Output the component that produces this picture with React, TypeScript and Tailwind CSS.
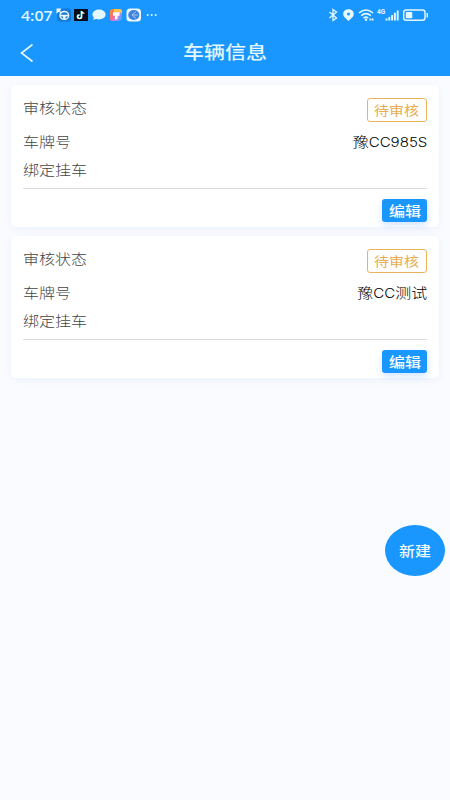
import React from "react";

const cjk = "font-['Noto_Sans_CJK_SC',sans-serif]";

type Vehicle = { id: number; prefix: string; latin: string; suffix: string };

const vehicles: Vehicle[] = [
  { id: 1, prefix: "豫", latin: "CC985S", suffix: "" },
  { id: 2, prefix: "豫", latin: "CC", suffix: "测试" },
];

function StatusBar() {
  return (
    <div className="flex h-[29px] items-center pl-[21px] pr-[21px] text-[#e4f8ff]">
      <span className="w-[35px] whitespace-nowrap font-['Noto_Sans',sans-serif] text-[15px] font-medium leading-[20px]">
        <span className="inline-block origin-left scale-x-[1.06]">4:07</span>
      </span>
      <svg className="h-[14px] w-[102px]" viewBox="0 0 102 14" fill="none">
        <rect x="1" y="0.5" width="14" height="13" rx="2" fill="#1579d6" />
        <path d="M0.5 0.500h5L4 2.800l2 2-1 1-2-2-2.500 2z" fill="#e4f8ff" />
        <ellipse cx="8.300" cy="7.400" rx="4.300" ry="3.900" stroke="#e9f8ff" strokeWidth="1.400" />
        <path d="M4.500 6.800h7.600v1.400L9.800 8.500l-.6 2.500H7.400l-.6-2.500-2.300-.3z" fill="#e9f8ff" />
        <rect x="18" y="1" width="14" height="12" fill="#080b19" />
        <path d="M25.100 2.800v5.800a2 1.800 0 1 1-2-1.800" stroke="#41dcdf" strokeWidth="1.300" />
        <path d="M25.700 3v5.800a2 1.800 0 1 1-2-1.800M25.700 3.200q.4 2 2.700 2.200" stroke="#fff" strokeWidth="1.400" />
        <ellipse cx="43" cy="6.500" rx="6.600" ry="5" fill="#e4f8ff" />
        <path d="M38 9l-.8 3 4-1.500z" fill="#e4f8ff" />
        <defs>
          <linearGradient id="app" x1="54" y1="3" x2="66" y2="11" gradientUnits="userSpaceOnUse">
            <stop stopColor="#ff8a35" />
            <stop offset=".35" stopColor="#ff6b72" />
            <stop offset=".6" stopColor="#d580e8" />
            <stop offset="1" stopColor="#35a9ff" />
          </linearGradient>
        </defs>
        <rect x="54" y="1" width="12" height="12" rx="2.500" fill="url(#app)" />
        <path d="M58 1h5.500q2.500 0 2.500 2.500v1.500l-8-1z" fill="#ffc34d" />
        <path d="M57 4.200h6.500v3.500h-2v3.500h-2.500V7.700h-2z" fill="#fff" />
        <rect x="70.500" y="0.500" width="14.500" height="13" rx="3.500" fill="#eef8ff" />
        <ellipse cx="77.800" cy="7" rx="5.600" ry="4.900" fill="#3f83dc" />
        <path d="M79.800 3.800L76 7l4 3.300M76 7h5.500" stroke="#b8d8f8" strokeWidth=".8" />
        <circle cx="91.700" cy="7" r="1" fill="#e4f8ff" />
        <circle cx="95.700" cy="7" r="1" fill="#e4f8ff" />
        <circle cx="99.700" cy="7" r="1" fill="#e4f8ff" />
      </svg>
      <svg className="ml-auto h-[14px] w-[101px]" viewBox="0 0 101 14" fill="none" stroke="#e4f8ff">
        <path d="M1.500 4l7 6L5 12.500v-11L8.500 4l-7 6" strokeWidth="1.300" />
        <path d="M20.500 1.200c-3 0-5.300 2-5.300 4.700 0 3.200 3.200 4.700 5.300 7 2.100-2.300 5.300-3.800 5.300-7 0-2.700-2.300-4.700-5.300-4.700z" fill="#e4f8ff" stroke="none" />
        <circle cx="20.500" cy="5.900" r="1.500" fill="#1997ff" stroke="none" />
        <path d="M31 5q7-6 14 0M33.200 7.700q4.800-4 9.600 0M35.600 10q2.400-1.900 4.600 0" strokeWidth="1.600" />
        <circle cx="38" cy="11.700" r="1.200" fill="#e4f8ff" stroke="none" />
        <path d="M41.500 11.400h4" strokeWidth="2" strokeDasharray="1.700 .6" />
        <text x="49" y="6" fill="#e4f8ff" stroke="none" fontSize="6.500" fontWeight="700" fontFamily="Roboto, sans-serif">4G</text>
        <path d="M58.500 12.500v-2M61.300 12.500V9M64.100 12.500V7M66.900 12.500V4.800M69.700 12.500V2.500" strokeWidth="1.900" />
        <rect x="75.700" y="2" width="21.300" height="10.300" rx="2.500" strokeWidth="1.400" />
        <rect x="77.800" y="4" width="6.500" height="6.300" rx=".8" fill="#e4f8ff" stroke="none" />
        <path d="M99.300 5v4.500" strokeWidth="1.500" />
      </svg>
    </div>
  );
}

function Label({ children }: { children: React.ReactNode }) {
  return (
    <span className="inline-block origin-left scale-x-[1.143] text-[14px] font-light leading-[20px] text-[#444]">
      {children}
    </span>
  );
}

function VehicleCard({ vehicle }: { vehicle: Vehicle }) {
  return (
    <section className="h-[142px] rounded-[5px] bg-white px-3 shadow-[0_2px_7px_rgba(80,120,230,0.07)]">
      <div className="flex h-[41px] items-start justify-between pt-[12px]">
        <Label>审核状态</Label>
        <span className="mt-px flex h-6 w-[60px] items-center justify-center rounded-[3px] border border-[#e9b45d] pb-px text-[13px] leading-none text-[#e8ad50]">
          <span className="scale-x-[1.15] whitespace-nowrap">待审核</span>
        </span>
      </div>
      <div className="flex h-[30px] items-center justify-between">
        <Label>车牌号</Label>
        <span className="inline-block origin-right scale-x-[1.143] whitespace-nowrap text-[14px] font-light leading-[20px] text-black">
          {vehicle.prefix}
          <span className="font-['Inter',sans-serif] text-[13.2px] font-light">{vehicle.latin}</span>
          {vehicle.suffix}
        </span>
      </div>
      <div className="flex h-[33px] items-center border-b border-[#dcdcdc] pb-[6px]">
        <Label>绑定挂车</Label>
      </div>
      <div className="flex justify-end pt-[10px]">
        <button className="flex h-[23px] w-[45px] items-center justify-center rounded-[3px] bg-[#1997ff] pb-[2px] text-[14px] font-medium leading-none text-[#f4fcff] shadow-[0_3px_7px_rgba(25,120,255,0.2)]">
          <span className="scale-x-[1.143] whitespace-nowrap">编辑</span>
        </button>
      </div>
    </section>
  );
}

export default function App() {
  return (
    <main className={`relative h-[800px] w-[450px] overflow-hidden bg-[#f9fbfe] ${cjk}`}>
      <header className="h-[76px] bg-[#1997ff]">
        <StatusBar />
        <div className="grid h-[47px] grid-cols-[60px_1fr_60px] items-center">
          <svg className="ml-[20px] h-[20px] w-[14px]" viewBox="0 0 14 20" fill="none" stroke="#e4f8ff" strokeWidth="1.600">
            <path d="M12.500 1.500L1.500 10l11 8.500" />
          </svg>
          <h1 className="pb-[4px] text-center text-[18px] font-medium leading-[24px] text-[#e4f8ff]">
            <span className="inline-block scale-x-[1.167]">车辆信息</span>
          </h1>
        </div>
      </header>
      <div className="flex flex-col gap-[9px] px-[11px] pt-[9px]">
        {vehicles.map((v) => (
          <VehicleCard key={v.id} vehicle={v} />
        ))}
      </div>
      <button className="absolute left-[385px] top-[525px] flex h-[51px] w-[60px] items-center justify-center rounded-[50%] bg-[#1997ff] pb-[2px] text-[14px] font-medium leading-none text-[#eefaff]">
        <span className="scale-x-[1.143] whitespace-nowrap">新建</span>
      </button>
    </main>
  );
}
